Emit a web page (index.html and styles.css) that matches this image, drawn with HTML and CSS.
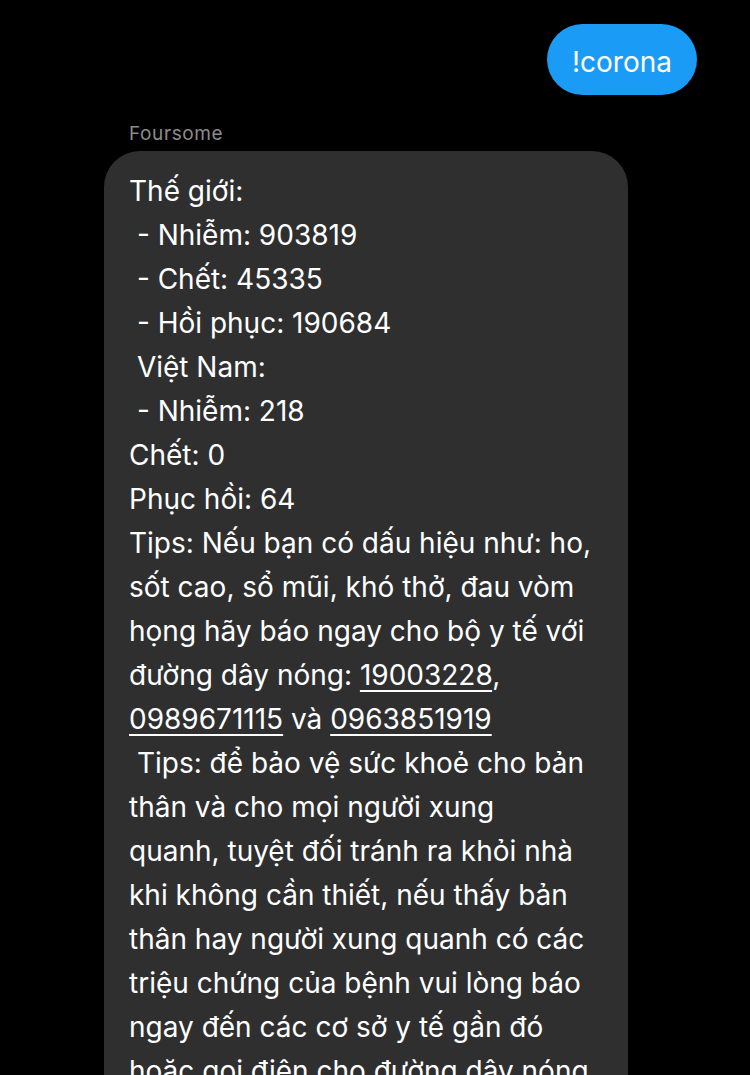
FILE: index.html
```html
<!DOCTYPE html>
<html lang="vi">
<head>
<meta charset="utf-8">
<link rel="stylesheet" href="styles.css">
</head>
<body>
<div class="chat">
  <div class="row-out">
    <div class="bubble-out">!corona</div>
  </div>
  <div class="incoming">
    <div class="sender">Foursome</div>
    <div class="bubble-in">
      <div class="line">Thế giới:</div>
      <div class="line"> - Nhiễm: 903819</div>
      <div class="line"> - Chết: 45335</div>
      <div class="line"> - Hồi phục: 190684</div>
      <div class="line"> Việt Nam:</div>
      <div class="line"> - Nhiễm: 218</div>
      <div class="line">Chết: 0</div>
      <div class="line">Phục hồi: 64</div>
      <div class="line">Tips: Nếu bạn có dấu hiệu như: ho,</div>
      <div class="line">sốt cao, sổ mũi, khó thở, đau vòm</div>
      <div class="line">họng hãy báo ngay cho bộ y tế với</div>
      <div class="line">đường dây nóng: <span class="link">19003228</span>,</div>
      <div class="line"><span class="link">0989671115</span> và <span class="link">0963851919</span></div>
      <div class="line"> Tips: để bảo vệ sức khoẻ cho bản</div>
      <div class="line">thân và cho mọi người xung</div>
      <div class="line">quanh, tuyệt đối tránh ra khỏi nhà</div>
      <div class="line">khi không cần thiết, nếu thấy bản</div>
      <div class="line">thân hay người xung quanh có các</div>
      <div class="line">triệu chứng của bệnh vui lòng báo</div>
      <div class="line">ngay đến các cơ sở y tế gần đó</div>
      <div class="line">hoặc gọi điện cho đường dây nóng</div>
    </div>
  </div>
</div>
</body>
</html>
```
FILE: styles.css
```css
html, body {
  margin: 0;
  padding: 0;
  background: #000;
  height: 100%;
  overflow: hidden;
}
.chat {
  font-family: Inter, "Noto Sans", sans-serif;
  color: #fff;
}
.row-out {
  display: flex;
  justify-content: flex-end;
  padding: 24px 53px 0 0;
}
.bubble-out {
  background: #1a9bf6;
  color: #fff;
  height: 71px;
  box-sizing: border-box;
  padding: 4px 25px 0;
  display: flex;
  align-items: center;
  border-radius: 36px;
  font-size: 28px;
}
.incoming {
  padding: 27px 0 0 104px;
}
.sender {
  color: #8c8c8c;
  font-size: 19px;
  letter-spacing: 0.6px;
  padding-left: 25px;
  line-height: 24px;
  margin-bottom: 5px;
}
.bubble-in {
  background: #2f2f2f;
  width: 524px;
  box-sizing: border-box;
  border-radius: 36px;
  padding: 18px 25px 20px;
  font-size: 28px;
  line-height: 44px;
}
.line {
  white-space: pre;
}
.link {
  text-decoration: underline;
  text-underline-offset: 5px;
  text-decoration-thickness: 2px;
}
```
